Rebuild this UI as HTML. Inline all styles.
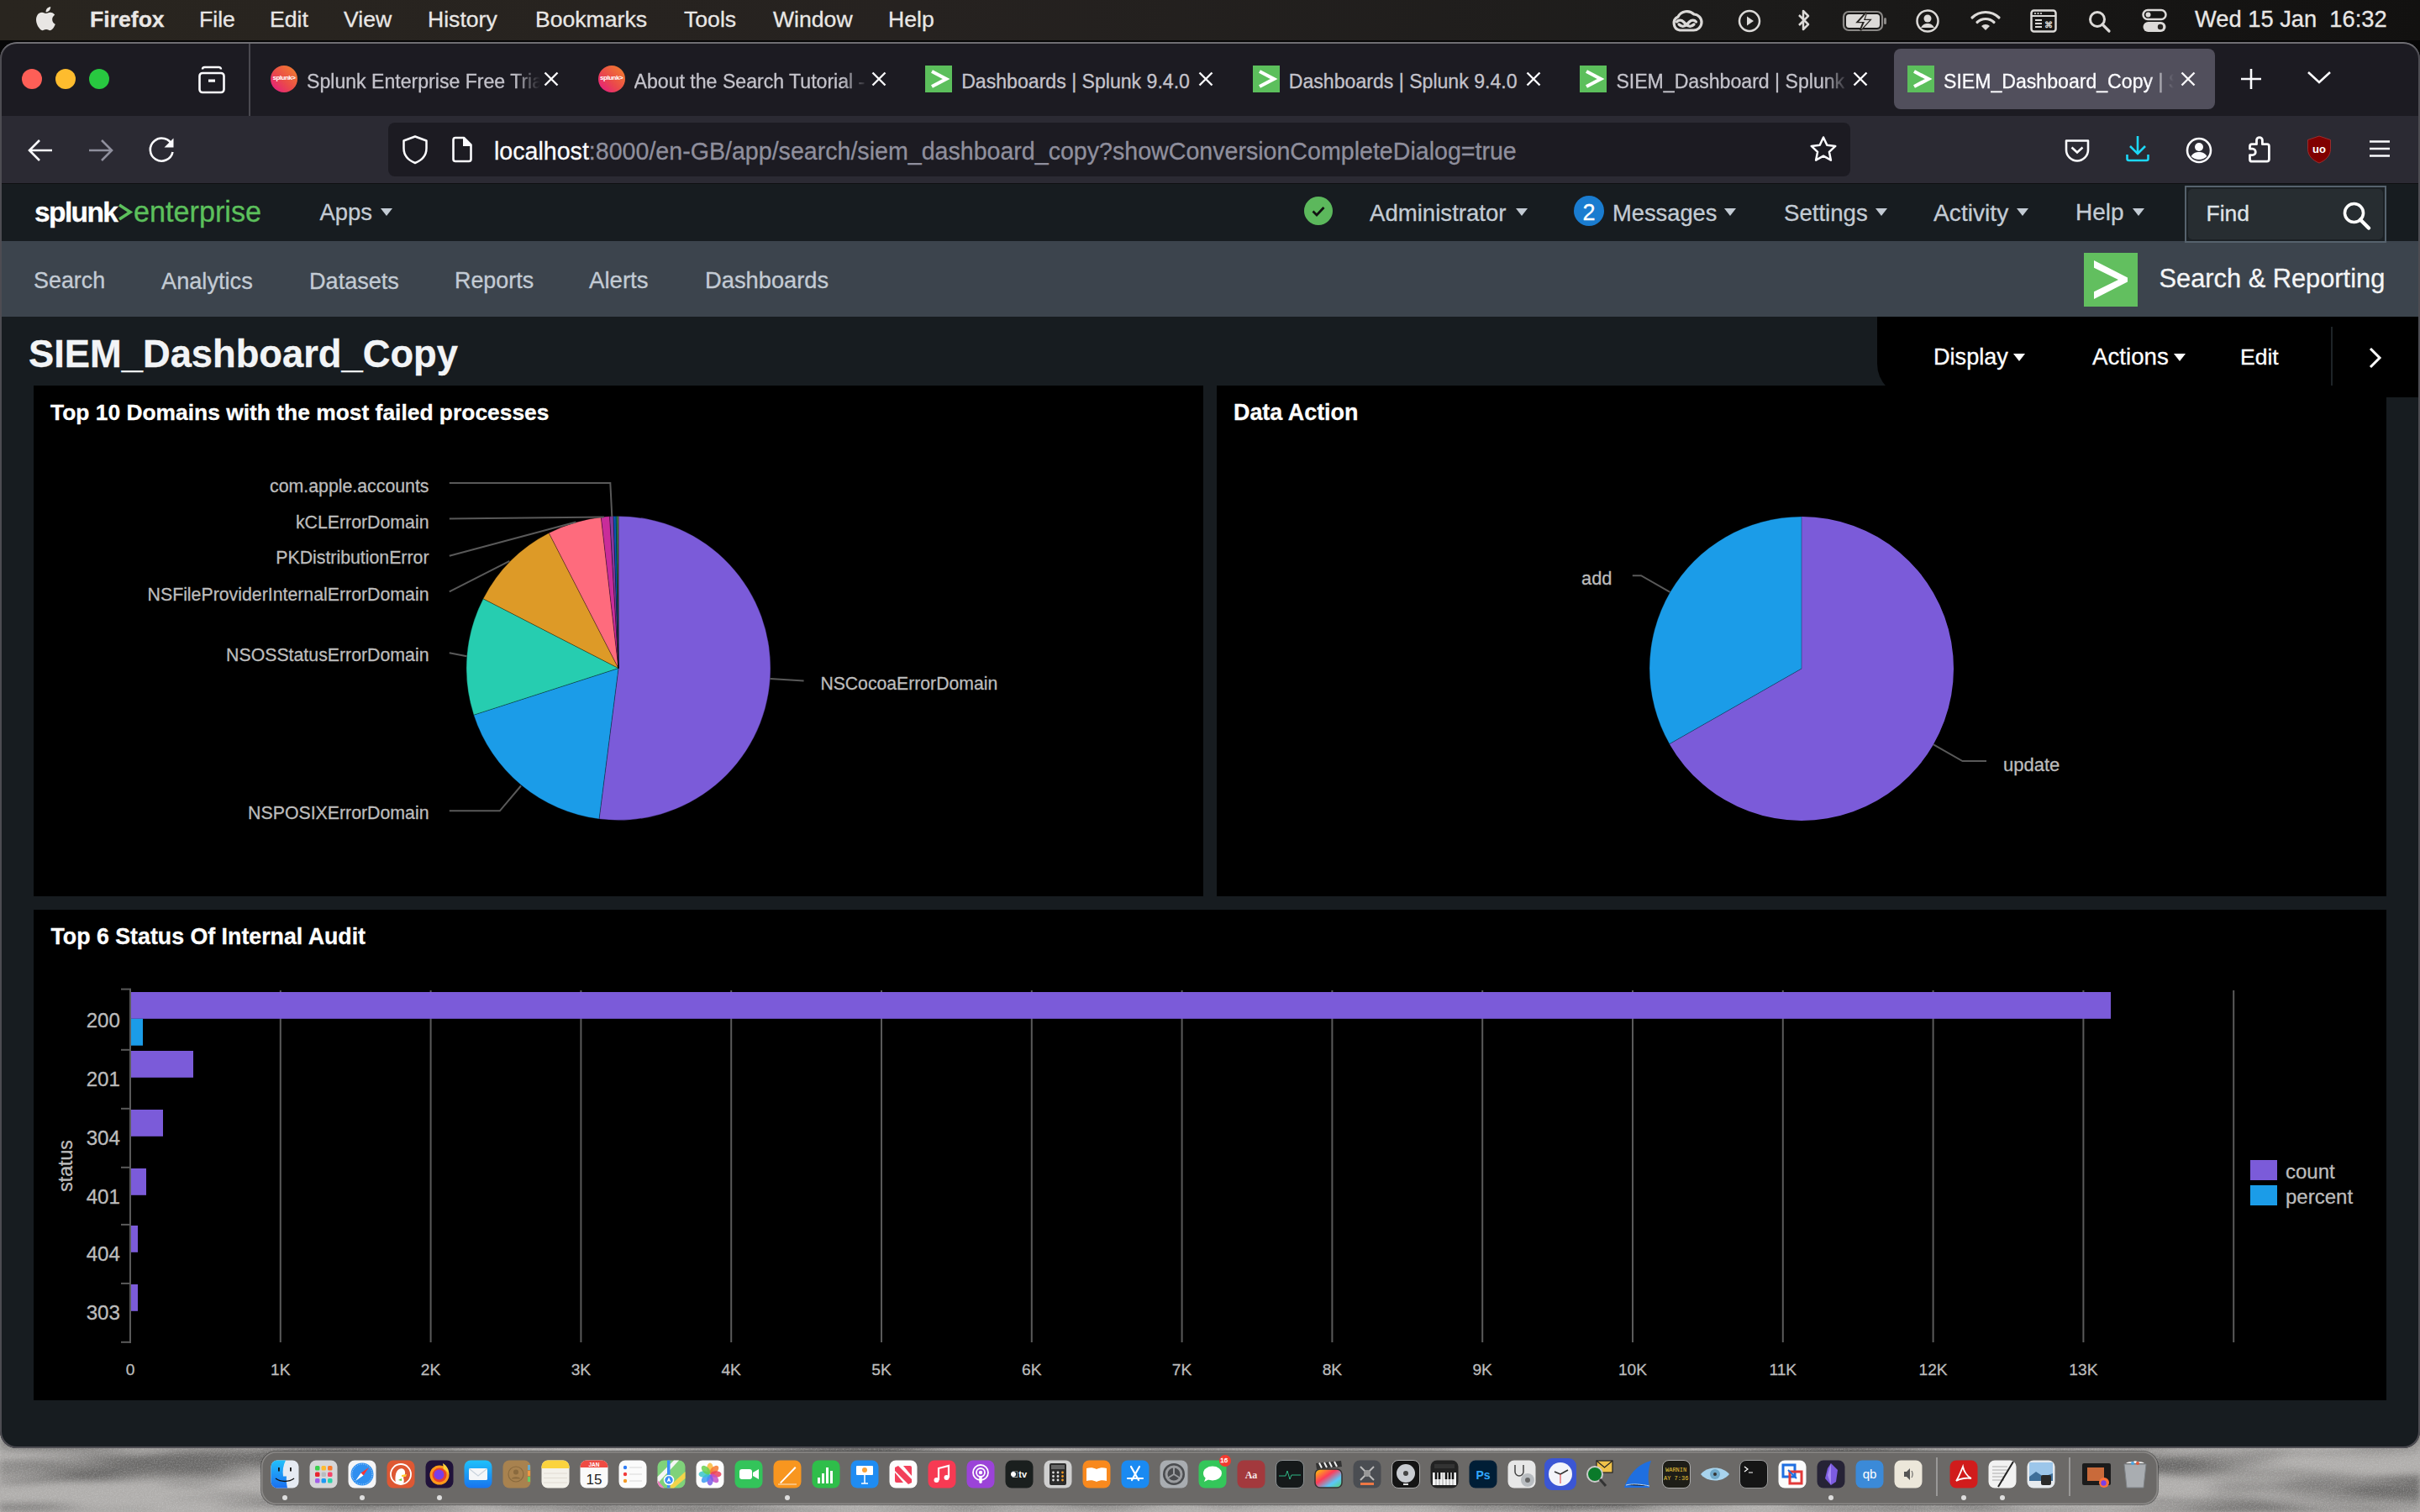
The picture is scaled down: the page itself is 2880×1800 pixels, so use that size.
<!DOCTYPE html><html><head><meta charset="utf-8"><style>html,body{margin:0;padding:0;width:2880px;height:1800px;overflow:hidden;background:#b8b6b4}*{box-sizing:border-box} .a{position:absolute} .t{position:absolute;white-space:nowrap;line-height:1;font-family:"Liberation Sans", sans-serif;-webkit-text-stroke:0.3px}body{font-family:"Liberation Sans", sans-serif} svg{overflow:visible}</style></head><body><div class="a" style="left:0;top:0;width:2880px;height:1800px;background:#a9a7a5"></div>
<svg class="a" style="left:0;top:1690px" width="2880" height="110"><defs><filter id="mrb" x="0" y="0" width="100%" height="100%" color-interpolation-filters="sRGB"><feTurbulence type="fractalNoise" baseFrequency="0.0035 0.03" numOctaves="3" seed="11"/><feColorMatrix type="matrix" values="0 0 0 0 0.42  0 0 0 0 0.415  0 0 0 0 0.41  3.0 0 0 0 -1.15"/><feGaussianBlur stdDeviation="3"/></filter><filter id="grn" x="0" y="0" width="100%" height="100%" color-interpolation-filters="sRGB"><feTurbulence type="fractalNoise" baseFrequency="0.6" numOctaves="2" seed="2"/><feColorMatrix type="matrix" values="0 0 0 0 0.9  0 0 0 0 0.9  0 0 0 0 0.9  1.4 0 0 0 -0.55"/></filter></defs><rect width="2880" height="110" fill="#b0aeac"/><rect width="2880" height="110" filter="url(#mrb)"/><rect width="2880" height="110" filter="url(#grn)" opacity="0.35"/></svg>
<div class="a" style="left:0.0px;top:0.0px;width:2880.0px;height:48.0px;background:linear-gradient(90deg,#29251f 0%,#262220 38%,#1d1c1b 70%,#121110 100%);"></div>
<div class="a" style="left:0.0px;top:48.0px;width:2880.0px;height:2.0px;background:#121110;"></div>
<svg class="a" style="left:38.0px;top:5.0px;" width="30" height="34" viewBox="0 0 30 34"><path fill="#e8e6e4" d="M24.2 18.1c0-3.6 2.9-5.3 3.1-5.4-1.7-2.5-4.3-2.8-5.2-2.9-2.2-.2-4.3 1.3-5.4 1.3-1.1 0-2.8-1.3-4.7-1.3-2.4 0-4.6 1.4-5.8 3.6-2.5 4.3-.6 10.7 1.8 14.2 1.2 1.7 2.6 3.6 4.4 3.6 1.8-.1 2.4-1.1 4.6-1.1 2.1 0 2.7 1.1 4.6 1.1 1.9 0 3.1-1.7 4.3-3.4 1.3-2 1.9-3.9 1.9-4-.1 0-3.6-1.4-3.6-5.7zM20.7 7.5c1-1.2 1.6-2.8 1.5-4.5-1.4.1-3.1.9-4.1 2.1-.9 1-1.7 2.7-1.5 4.3 1.6.1 3.1-.8 4.1-1.9z"/></svg>
<div class="t" style="top:9.5px;font-size:26.6px;color:#e9e7e5;font-weight:700;left:107.0px;">Firefox</div>
<div class="t" style="top:9.5px;font-size:26.6px;color:#e9e7e5;left:237.0px;">File</div>
<div class="t" style="top:9.5px;font-size:26.6px;color:#e9e7e5;left:321.0px;">Edit</div>
<div class="t" style="top:9.5px;font-size:26.6px;color:#e9e7e5;left:409.0px;">View</div>
<div class="t" style="top:9.5px;font-size:26.6px;color:#e9e7e5;left:509.0px;">History</div>
<div class="t" style="top:9.5px;font-size:26.6px;color:#e9e7e5;left:637.0px;">Bookmarks</div>
<div class="t" style="top:9.5px;font-size:26.6px;color:#e9e7e5;left:814.0px;">Tools</div>
<div class="t" style="top:9.5px;font-size:26.6px;color:#e9e7e5;left:920.0px;">Window</div>
<div class="t" style="top:9.5px;font-size:26.6px;color:#e9e7e5;left:1057.0px;">Help</div>
<svg class="a" style="left:1984.0px;top:8.0px;" width="46" height="34" viewBox="0 0 46 34"><g fill="none" stroke="#dcdad8" stroke-width="3.2" stroke-linecap="round"><path d="M15 28H31a9.5 9.5 0 0 0 1-19 12 12 0 0 0-19 3A8.5 8.5 0 0 0 15 28z"/><path d="M14 21c3.5 3.5 7 2.5 9.5 0l3-3c2.5-2.5 6-2.5 8 0"/><path d="M32 21c-3.5 3.5-7 2.5-9.5 0l-3-3c-2.5-2.5-6-2.5-8 0"/></g></svg>
<svg class="a" style="left:2068.0px;top:11.0px;" width="28" height="28" viewBox="0 0 28 28"><circle cx="14" cy="14" r="12" fill="none" stroke="#dcdad8" stroke-width="2.5"/><path d="M11 8.5l8 5.5-8 5.5z" fill="#dcdad8"/></svg>
<svg class="a" style="left:2136.0px;top:9.0px;" width="20" height="32" viewBox="0 0 20 32"><path d="M5 9l11 11-6 6V4l6 6L5 21" fill="none" stroke="#dcdad8" stroke-width="2.5" stroke-linejoin="round"/></svg>
<svg class="a" style="left:2192.0px;top:12.0px;" width="56" height="26" viewBox="0 0 56 26"><rect x="2" y="2" width="46" height="22" rx="6" fill="none" stroke="#8a8886" stroke-width="2.2"/><rect x="5" y="5" width="40" height="16" rx="3.5" fill="#dcdad8"/><rect x="50" y="9" width="3" height="8" rx="1.5" fill="#8a8886"/><path d="M29 3l-10 11h7l-4 10 11-12h-7z" fill="#25221f" stroke="#25221f" stroke-width="2.5"/><path d="M29 4l-9 10h7l-4 9 10-11h-7z" fill="#dcdad8"/></svg>
<svg class="a" style="left:2279.0px;top:10.0px;" width="30" height="30" viewBox="0 0 30 30"><circle cx="15" cy="15" r="12.5" fill="none" stroke="#dcdad8" stroke-width="2.5"/><circle cx="15" cy="12" r="4.5" fill="#dcdad8"/><path d="M7 23c2-4 5-5 8-5s6 1 8 5" fill="#dcdad8"/></svg>
<svg class="a" style="left:2344.0px;top:10.0px;" width="38" height="28" viewBox="0 0 38 28"><path d="M3 11a23 23 0 0 1 32 0" fill="none" stroke="#dcdad8" stroke-width="3.2" stroke-linecap="round"/><path d="M9 16.5a14.5 14.5 0 0 1 20 0" fill="none" stroke="#dcdad8" stroke-width="3.2" stroke-linecap="round"/><path d="M19 26l-5-5a7 7 0 0 1 10 0z" fill="#dcdad8"/></svg>
<svg class="a" style="left:2416.0px;top:11.0px;" width="32" height="28" viewBox="0 0 32 28"><rect x="1.5" y="1.5" width="29" height="25" rx="3" fill="none" stroke="#dcdad8" stroke-width="2.5"/><path d="M1.5 8h29" stroke="#dcdad8" stroke-width="2"/><circle cx="6" cy="5" r="1.1" fill="#dcdad8"/><circle cx="9.5" cy="5" r="1.1" fill="#dcdad8"/><circle cx="13" cy="5" r="1.1" fill="#dcdad8"/><path d="M6 13h8M6 17h8M6 21h8" stroke="#dcdad8" stroke-width="2"/><text x="16.5" y="22" font-size="10" font-weight="700" fill="#dcdad8" font-family="Liberation Sans">⌘</text></svg>
<svg class="a" style="left:2484.0px;top:11.0px;" width="30" height="30" viewBox="0 0 30 30"><circle cx="12" cy="12" r="8.5" fill="none" stroke="#dcdad8" stroke-width="3"/><path d="M18 18l8 8" stroke="#dcdad8" stroke-width="3.2" stroke-linecap="round"/></svg>
<svg class="a" style="left:2549.0px;top:10.0px;" width="30" height="30" viewBox="0 0 30 30"><rect x="1.5" y="2" width="27" height="11" rx="5.5" fill="none" stroke="#dcdad8" stroke-width="2.5"/><circle cx="7.5" cy="7.5" r="3" fill="#dcdad8"/><rect x="1.5" y="16" width="27" height="12" rx="6" fill="#dcdad8"/><circle cx="22" cy="22" r="3.2" fill="#25221f"/></svg>
<div class="t" style="top:8.9px;font-size:27.3px;color:#e9e7e5;left:2612.0px;">Wed 15 Jan&nbsp; 16:32</div>
<div class="a" style="left:0.0px;top:48.0px;width:2880.0px;height:32.0px;background:#060606;"></div>
<div class="a" style="left:0;top:0;width:2880px;height:1724px;clip-path:inset(50px 0 0 0 round 20px);background:#171c20">
<div class="a" style="left:0.0px;top:49.0px;width:2880.0px;height:89.0px;background:#1c1b22;"></div>
<div class="a" style="left:26.0px;top:82.0px;width:24.0px;height:24.0px;background:#fe5f57;border-radius:50%"></div>
<div class="a" style="left:66.0px;top:82.0px;width:24.0px;height:24.0px;background:#febc2e;border-radius:50%"></div>
<div class="a" style="left:106.0px;top:82.0px;width:24.0px;height:24.0px;background:#28c840;border-radius:50%"></div>
<svg class="a" style="left:232.0px;top:76.0px;" width="40" height="38" viewBox="0 0 40 38"><path d="M9 6.5a2.5 2.5 0 0 1 2.5-2.5h17a2.5 2.5 0 0 1 2.5 2.5" fill="none" stroke="#fbfbfe" stroke-width="2.5"/><rect x="5.5" y="11" width="29" height="23" rx="3.5" fill="none" stroke="#fbfbfe" stroke-width="2.6"/><rect x="16" y="18.5" width="8" height="3.2" fill="#fbfbfe"/></svg>
<div class="a" style="left:296.0px;top:51.0px;width:2.0px;height:87.0px;background:#4a4950;"></div>
<div class="a" style="left:2254.0px;top:58.0px;width:382.0px;height:72.0px;background:#514f5c;border-radius:8px"></div>
<div class="a" style="left:322.0px;top:78.0px;width:32.0px;height:32.0px;background:linear-gradient(45deg, #e3168a 0%, #ea4a4a 45%, #f3852a 100%);border-radius:50%;overflow:hidden"><div class="t" style="left:16px;top:11px;font-size:8px;font-weight:700;color:#fff;letter-spacing:-0.5px;transform:translateX(-50%);-webkit-text-stroke:0">splunk&gt;</div></div>
<div class="a" style="left:365.0px;top:72px;width:278px;height:44px;overflow:hidden;-webkit-mask-image:linear-gradient(90deg,#000 89%,transparent 100%);"><div class="t" style="left:0;top:13.9px;font-size:23.1px;color:#c4c3cb">Splunk Enterprise Free Trial | Splunk</div></div>
<svg class="a" style="left:647.0px;top:85.0px;" width="18" height="18" viewBox="0 0 18 18"><path d="M1.5 1.5l15 15M16.5 1.5l-15 15" stroke="#fbfbfe" stroke-width="2.4"/></svg>
<div class="a" style="left:711.6px;top:78.0px;width:32.0px;height:32.0px;background:linear-gradient(45deg, #e3168a 0%, #ea4a4a 45%, #f3852a 100%);border-radius:50%;overflow:hidden"><div class="t" style="left:16px;top:11px;font-size:8px;font-weight:700;color:#fff;letter-spacing:-0.5px;transform:translateX(-50%);-webkit-text-stroke:0">splunk&gt;</div></div>
<div class="a" style="left:754.6px;top:72px;width:278px;height:44px;overflow:hidden;-webkit-mask-image:linear-gradient(90deg,#000 89%,transparent 100%);"><div class="t" style="left:0;top:13.9px;font-size:23.1px;color:#c4c3cb">About the Search Tutorial - Splunk</div></div>
<svg class="a" style="left:1036.6px;top:85.0px;" width="18" height="18" viewBox="0 0 18 18"><path d="M1.5 1.5l15 15M16.5 1.5l-15 15" stroke="#fbfbfe" stroke-width="2.4"/></svg>
<div class="a" style="left:1101.2px;top:78.0px;width:32.0px;height:32.0px;background:#5cbf5c;"><svg class="a" style="left:0;top:0" width="32" height="32"><path d="M8 7l17 9-17 9" fill="none" stroke="#fff" stroke-width="4.2" stroke-linejoin="miter"/></svg></div>
<div class="a" style="left:1144.2px;top:72px;width:278px;height:44px;overflow:hidden;"><div class="t" style="left:0;top:13.9px;font-size:23.1px;color:#c4c3cb">Dashboards | Splunk 9.4.0</div></div>
<svg class="a" style="left:1426.2px;top:85.0px;" width="18" height="18" viewBox="0 0 18 18"><path d="M1.5 1.5l15 15M16.5 1.5l-15 15" stroke="#fbfbfe" stroke-width="2.4"/></svg>
<div class="a" style="left:1490.8px;top:78.0px;width:32.0px;height:32.0px;background:#5cbf5c;"><svg class="a" style="left:0;top:0" width="32" height="32"><path d="M8 7l17 9-17 9" fill="none" stroke="#fff" stroke-width="4.2" stroke-linejoin="miter"/></svg></div>
<div class="a" style="left:1533.8px;top:72px;width:278px;height:44px;overflow:hidden;"><div class="t" style="left:0;top:13.9px;font-size:23.1px;color:#c4c3cb">Dashboards | Splunk 9.4.0</div></div>
<svg class="a" style="left:1815.8px;top:85.0px;" width="18" height="18" viewBox="0 0 18 18"><path d="M1.5 1.5l15 15M16.5 1.5l-15 15" stroke="#fbfbfe" stroke-width="2.4"/></svg>
<div class="a" style="left:1880.4px;top:78.0px;width:32.0px;height:32.0px;background:#5cbf5c;"><svg class="a" style="left:0;top:0" width="32" height="32"><path d="M8 7l17 9-17 9" fill="none" stroke="#fff" stroke-width="4.2" stroke-linejoin="miter"/></svg></div>
<div class="a" style="left:1923.4px;top:72px;width:278px;height:44px;overflow:hidden;-webkit-mask-image:linear-gradient(90deg,#000 89%,transparent 100%);"><div class="t" style="left:0;top:13.9px;font-size:23.1px;color:#c4c3cb">SIEM_Dashboard | Splunk 9.4.0</div></div>
<svg class="a" style="left:2205.4px;top:85.0px;" width="18" height="18" viewBox="0 0 18 18"><path d="M1.5 1.5l15 15M16.5 1.5l-15 15" stroke="#fbfbfe" stroke-width="2.4"/></svg>
<div class="a" style="left:2270.0px;top:78.0px;width:32.0px;height:32.0px;background:#5cbf5c;"><svg class="a" style="left:0;top:0" width="32" height="32"><path d="M8 7l17 9-17 9" fill="none" stroke="#fff" stroke-width="4.2" stroke-linejoin="miter"/></svg></div>
<div class="a" style="left:2313.0px;top:72px;width:274px;height:44px;overflow:hidden;-webkit-mask-image:linear-gradient(90deg,#000 89%,transparent 100%);"><div class="t" style="left:0;top:13.9px;font-size:23.1px;color:#fbfbfe">SIEM_Dashboard_Copy | Splunk</div></div>
<svg class="a" style="left:2595.0px;top:85.0px;" width="18" height="18" viewBox="0 0 18 18"><path d="M1.5 1.5l15 15M16.5 1.5l-15 15" stroke="#fbfbfe" stroke-width="2.4"/></svg>
<svg class="a" style="left:2665.0px;top:80.0px;" width="28" height="28" viewBox="0 0 28 28"><path d="M14 2v24M2 14h24" stroke="#fbfbfe" stroke-width="2.6"/></svg>
<svg class="a" style="left:2744.0px;top:82.0px;" width="32" height="20" viewBox="0 0 32 20"><path d="M3 4l13 12L29 4" fill="none" stroke="#fbfbfe" stroke-width="2.6"/></svg>
<div class="a" style="left:0.0px;top:138.0px;width:2880.0px;height:80.0px;background:#2b2a33;"></div>
<div class="a" style="left:0.0px;top:218.0px;width:2880.0px;height:1.0px;background:#0f0f12;"></div>
<svg class="a" style="left:32.0px;top:164.0px;" width="32" height="30" viewBox="0 0 32 30"><path d="M15 3L3 15l12 12M3 15h27" fill="none" stroke="#fbfbfe" stroke-width="2.6"/></svg>
<svg class="a" style="left:104.0px;top:164.0px;" width="32" height="30" viewBox="0 0 32 30"><path d="M17 3l12 12-12 12M29 15H2" fill="none" stroke="#8f8f9d" stroke-width="2.6"/></svg>
<svg class="a" style="left:174.0px;top:160.0px;" width="36" height="36" viewBox="0 0 36 36"><path d="M31 13.5A13.5 13.5 0 1 0 31.5 21" fill="none" stroke="#fbfbfe" stroke-width="2.6"/><path d="M32.5 4.5v11h-11z" fill="#fbfbfe"/></svg>
<div class="a" style="left:462.0px;top:146.0px;width:1740.0px;height:64.0px;background:#1c1b22;border-radius:8px"></div>
<svg class="a" style="left:476.0px;top:160.0px;" width="36" height="36" viewBox="0 0 36 36"><path d="M18 2.5L4.5 7.5v9c0 8.5 6 14.5 13.5 17.5 7.5-3 13.5-9 13.5-17.5v-9z" fill="none" stroke="#fbfbfe" stroke-width="2.5" stroke-linejoin="round"/></svg>
<svg class="a" style="left:536.0px;top:162.0px;" width="28" height="32" viewBox="0 0 28 32"><path d="M3.5 4.5a2.5 2.5 0 0 1 2.5-2.5h10l8.5 8.5v17a2.5 2.5 0 0 1-2.5 2.5H6a2.5 2.5 0 0 1-2.5-2.5z" fill="none" stroke="#fbfbfe" stroke-width="2.6" stroke-linejoin="round"/><path d="M15 2v10h10z" fill="#fbfbfe"/></svg>
<div class="t" style="top:166.3px;font-size:28.6px;color:#8f8f9d;left:588.0px;"><span style="color:#fbfbfe">localhost</span>:8000/en-GB/app/search/siem_dashboard_copy?showConversionCompleteDialog=true</div>
<svg class="a" style="left:2152.0px;top:160.0px;" width="36" height="36" viewBox="0 0 36 36"><path d="M18 3.5l4.3 9.2 10 1.2-7.4 6.9 2 9.9L18 25.7l-8.9 5 2-9.9-7.4-6.9 10-1.2z" fill="none" stroke="#fbfbfe" stroke-width="2.5" stroke-linejoin="round"/></svg>
<svg class="a" style="left:2455.0px;top:163.0px;" width="34" height="32" viewBox="0 0 34 32"><path d="M4 4.5h26v11c0 7-6 13-13 13S4 22.5 4 15.5z" fill="none" stroke="#fbfbfe" stroke-width="2.6" stroke-linejoin="round"/><path d="M10.5 12.5L17 18.5l6.5-6" fill="none" stroke="#fbfbfe" stroke-width="2.6"/></svg>
<svg class="a" style="left:2528.0px;top:160.0px;" width="32" height="34" viewBox="0 0 32 34"><path d="M16 2v21M7 14l9 9 9-9" fill="none" stroke="#1cd8f8" stroke-width="2.6"/><path d="M3.5 24v5a2 2 0 0 0 2 2h21a2 2 0 0 0 2-2v-5" fill="none" stroke="#1cd8f8" stroke-width="2.6"/></svg>
<svg class="a" style="left:2600.0px;top:162.0px;" width="34" height="34" viewBox="0 0 34 34"><circle cx="17" cy="17" r="14" fill="none" stroke="#fbfbfe" stroke-width="2.6"/><circle cx="17" cy="13" r="5" fill="#fbfbfe"/><path d="M7.5 24c2.5-4 6-5 9.5-5s7 1 9.5 5c-2.5 2.5-6 4-9.5 4s-7-1.5-9.5-4z" fill="#fbfbfe"/></svg>
<svg class="a" style="left:2665.0px;top:155.0px;" width="50" height="45" viewBox="0 0 50 45"><path d="M12.5 22.2V19.2a2.5 2.5 0 0 1 2.5-2.5H20.5V12a3.45 3.45 0 0 1 6.9 0V16.7H33a2.4 2.4 0 0 1 2.4 2.4V34.8a2.4 2.4 0 0 1-2.4 2.4H15a2.5 2.5 0 0 1-2.5-2.5V29.6H15.6a3.7 3.7 0 0 0 0-7.4z" fill="none" stroke="#fbfbfe" stroke-width="2.8" stroke-linejoin="round"/></svg>
<svg class="a" style="left:2744.0px;top:160.0px;" width="32" height="36" viewBox="0 0 32 36"><path d="M16 2L2.5 6.5v11c0 8 6 13.5 13.5 16.5 7.5-3 13.5-8.5 13.5-16.5v-11z" fill="#800000" stroke="#a33" stroke-width="0.8"/><text x="16" y="22" text-anchor="middle" font-size="13" font-weight="700" fill="#fff" font-family="Liberation Sans">uo</text></svg>
<svg class="a" style="left:2818.0px;top:164.0px;" width="28" height="26" viewBox="0 0 28 26"><path d="M2 4.5h24M2 13h24M2 21.5h24" stroke="#fbfbfe" stroke-width="2.6"/></svg>
<div class="a" style="left:0.0px;top:219.0px;width:2880.0px;height:68.0px;background:#171c20;"></div>
<div class="t" style="top:235.6px;font-size:33.5px;color:#ffffff;font-weight:700;letter-spacing:-1.6px;left:41.0px;">splunk</div>
<svg class="a" style="left:140.0px;top:240.0px;" width="18" height="26" viewBox="0 0 18 26"><path d="M2 4l13 8.5L2 21" fill="none" stroke="#5cc05c" stroke-width="3.6"/></svg>
<div class="t" style="top:235.0px;font-size:34.2px;color:#5cc05c;letter-spacing:0px;left:159.0px;">enterprise</div>
<div class="t" style="top:238.8px;font-size:27.4px;color:#c3cbd4;left:380.5px;">Apps</div>
<svg class="a" style="left:453.0px;top:248.0px;" width="14" height="9" viewBox="0 0 14 9"><path d="M0 0h14l-7.0 9z" fill="#c3cbd4"/></svg>
<div class="a" style="left:1552.0px;top:234.0px;width:34.0px;height:34.0px;background:#5cb85c;border-radius:50%"><svg class="a" style="left:0;top:0" width="34" height="34"><path d="M10.5 17.5l4.5 4.5 8.5-9" fill="none" stroke="#111" stroke-width="2.8"/></svg></div>
<div class="t" style="top:239.6px;font-size:27.6px;color:#c3cbd4;left:1630.0px;">Administrator</div>
<svg class="a" style="left:1804.0px;top:248.0px;" width="14" height="9" viewBox="0 0 14 9"><path d="M0 0h14l-7.0 9z" fill="#c3cbd4"/></svg>
<div class="a" style="left:1873.0px;top:233.0px;width:36.0px;height:36.0px;background:#1a7cd0;border-radius:50%"></div>
<div class="t" style="top:240.1px;font-size:27px;color:#ffffff;left:1891.0px;transform:translateX(-50%);">2</div>
<div class="t" style="top:239.9px;font-size:27.3px;color:#c3cbd4;left:1919.0px;">Messages</div>
<svg class="a" style="left:2052.0px;top:248.0px;" width="14" height="9" viewBox="0 0 14 9"><path d="M0 0h14l-7.0 9z" fill="#c3cbd4"/></svg>
<div class="t" style="top:239.6px;font-size:27.6px;color:#c3cbd4;left:2123.0px;">Settings</div>
<svg class="a" style="left:2232.0px;top:248.0px;" width="14" height="9" viewBox="0 0 14 9"><path d="M0 0h14l-7.0 9z" fill="#c3cbd4"/></svg>
<div class="t" style="top:239.1px;font-size:28.2px;color:#c3cbd4;left:2301.0px;">Activity</div>
<svg class="a" style="left:2400.0px;top:248.0px;" width="14" height="9" viewBox="0 0 14 9"><path d="M0 0h14l-7.0 9z" fill="#c3cbd4"/></svg>
<div class="t" style="top:239.3px;font-size:28.0px;color:#c3cbd4;left:2470.0px;">Help</div>
<svg class="a" style="left:2538.0px;top:248.0px;" width="14" height="9" viewBox="0 0 14 9"><path d="M0 0h14l-7.0 9z" fill="#c3cbd4"/></svg>
<div class="a" style="left:0.0px;top:287.0px;width:2880.0px;height:90.0px;background:#3c444d;"></div>
<div class="t" style="top:320.7px;font-size:26.9px;color:#c3cbd4;left:40.0px;">Search</div>
<div class="t" style="top:320.5px;font-size:27.2px;color:#c3cbd4;left:192.0px;">Analytics</div>
<div class="t" style="top:320.6px;font-size:27.1px;color:#c3cbd4;left:368.0px;">Datasets</div>
<div class="t" style="top:320.7px;font-size:26.9px;color:#c3cbd4;left:541.0px;">Reports</div>
<div class="t" style="top:320.1px;font-size:27.6px;color:#c3cbd4;left:701.0px;">Alerts</div>
<div class="t" style="top:320.4px;font-size:27.3px;color:#c3cbd4;left:839.0px;">Dashboards</div>
<div class="a" style="left:2480.0px;top:301.0px;width:64.0px;height:64.0px;background:#62bf5f;"><svg class="a" style="left:0;top:0" width="64" height="64"><path d="M12 9l40 20.5v5L12 55v-8.7l29-14.3-29-14.3z" fill="#fff"/></svg></div>
<div class="t" style="top:316.9px;font-size:30.8px;color:#f4f5f6;left:2569.5px;">Search &amp; Reporting</div>
<div class="a" style="left:2600.0px;top:221.0px;width:240.0px;height:68.0px;background:#1b2024;border:2px solid #56626d;box-sizing:border-box"><div class="a" style="left:2px;top:2px;right:2px;bottom:2px;background:#272d31;border-radius:5px"></div></div>
<div class="t" style="top:240.6px;font-size:26.5px;color:#dfe3e8;left:2625.5px;">Find</div>
<svg class="a" style="left:2784.0px;top:238.0px;" width="44" height="36" viewBox="0 0 44 36"><circle cx="17.5" cy="15.5" r="11" fill="none" stroke="#ffffff" stroke-width="3.6"/><path d="M25 23.5l10 10" stroke="#ffffff" stroke-width="4.5" stroke-linecap="round"/></svg>
<div class="t" style="top:398.7px;font-size:45.3px;color:#f2f4f6;font-weight:700;left:34.0px;">SIEM_Dashboard_Copy</div>
<div class="a" style="left:2234.0px;top:377.0px;width:646.0px;height:96.0px;background:#000;border-bottom-left-radius:40px"></div>
<div class="t" style="top:411.1px;font-size:27.1px;color:#ffffff;left:2301.0px;">Display</div>
<svg class="a" style="left:2396.0px;top:421.0px;" width="14" height="9" viewBox="0 0 14 9"><path d="M0 0h14l-7.0 9z" fill="#ffffff"/></svg>
<div class="t" style="top:410.6px;font-size:27.7px;color:#ffffff;left:2490.0px;">Actions</div>
<svg class="a" style="left:2587.0px;top:421.0px;" width="14" height="9" viewBox="0 0 14 9"><path d="M0 0h14l-7.0 9z" fill="#ffffff"/></svg>
<div class="t" style="top:411.6px;font-size:26.5px;color:#ffffff;left:2666.0px;">Edit</div>
<div class="a" style="left:2774.0px;top:389.0px;width:2.0px;height:72.0px;background:#1e2428;"></div>
<svg class="a" style="left:2816.0px;top:412.0px;" width="22" height="28" viewBox="0 0 22 28"><path d="M5 3l11 11L5 25" fill="none" stroke="#fff" stroke-width="3"/></svg>
<div class="a" style="left:40.0px;top:459.0px;width:1392.0px;height:608.0px;background:#000;"></div>
<div class="a" style="left:1448.0px;top:459.0px;width:1392.0px;height:608.0px;background:#000;"></div>
<div class="a" style="left:2840.0px;top:459.0px;width:38.0px;height:14.0px;background:#000;"></div>
<div class="a" style="left:40.0px;top:1083.0px;width:2800.0px;height:584.0px;background:#000;"></div>
<div class="t" style="top:477.7px;font-size:26.4px;color:#ffffff;font-weight:700;left:60.0px;">Top 10 Domains with the most failed processes</div>
<div class="t" style="top:477.7px;font-size:26.9px;color:#ffffff;font-weight:700;left:1468.0px;">Data Action</div>
<div class="t" style="top:1101.7px;font-size:26.75px;color:#ffffff;font-weight:700;left:60.5px;">Top 6 Status Of Internal Audit</div>
<svg class="a" style="left:0;top:0" width="2880" height="1800"><path d="M736.00 795.50L736.00 614.50A181 181 0 1 1 713.00 975.03Z" fill="#7b5bd9" stroke="#000" stroke-width="0.6" stroke-opacity="0.5"/><path d="M736.00 795.50L713.00 975.03A181 181 0 0 1 563.76 851.13Z" fill="#1b9ce8" stroke="#000" stroke-width="0.6" stroke-opacity="0.5"/><path d="M736.00 795.50L563.76 851.13A181 181 0 0 1 575.02 712.77Z" fill="#26cdb0" stroke="#000" stroke-width="0.6" stroke-opacity="0.5"/><path d="M736.00 795.50L575.02 712.77A181 181 0 0 1 653.27 634.52Z" fill="#dd9a27" stroke="#000" stroke-width="0.6" stroke-opacity="0.5"/><path d="M736.00 795.50L653.27 634.52A181 181 0 0 1 715.35 615.68Z" fill="#fe6b7d" stroke="#000" stroke-width="0.6" stroke-opacity="0.5"/><path d="M736.00 795.50L715.35 615.68A181 181 0 0 1 725.58 614.80Z" fill="#c92c9a" stroke="#000" stroke-width="0.6" stroke-opacity="0.5"/><path d="M736.00 795.50L725.58 614.80A181 181 0 0 1 730.00 614.60Z" fill="#843a9c" stroke="#000" stroke-width="0.6" stroke-opacity="0.5"/><path d="M736.00 795.50L730.00 614.60A181 181 0 0 1 733.16 614.52Z" fill="#0b57b9" stroke="#000" stroke-width="0.6" stroke-opacity="0.5"/><path d="M736.00 795.50L733.16 614.52A181 181 0 0 1 735.05 614.50Z" fill="#0e8d80" stroke="#000" stroke-width="0.6" stroke-opacity="0.5"/><path d="M736.00 795.50L735.05 614.50A181 181 0 0 1 736.00 614.50Z" fill="#98ae10" stroke="#000" stroke-width="0.6" stroke-opacity="0.5"/><polyline points="534.8,575.0 726.3,575.0 728.3,615.0" fill="none" stroke="#595959" stroke-width="2"/><polyline points="534.8,617.6 718.9,615.4" fill="none" stroke="#595959" stroke-width="2"/><polyline points="534.8,661.7 685.4,621.5" fill="none" stroke="#595959" stroke-width="2"/><polyline points="534.8,704.3 606.4,667.8" fill="none" stroke="#595959" stroke-width="2"/><polyline points="534.8,777.3 555.5,781.3" fill="none" stroke="#595959" stroke-width="2"/><polyline points="534.8,965.3 594.8,965.3 620.0,935.5" fill="none" stroke="#595959" stroke-width="2"/><polyline points="916.5,807.9 956.6,810.6" fill="none" stroke="#595959" stroke-width="2"/></svg>
<div class="t" style="top:568.6px;font-size:21.3px;color:#bcbcbc;left:510.5px;transform:translateX(-100%);">com.apple.accounts</div>
<div class="t" style="top:611.8px;font-size:21.3px;color:#bcbcbc;left:510.5px;transform:translateX(-100%);">kCLErrorDomain</div>
<div class="t" style="top:653.8px;font-size:21.3px;color:#bcbcbc;left:510.5px;transform:translateX(-100%);">PKDistributionError</div>
<div class="t" style="top:698.0px;font-size:21.3px;color:#bcbcbc;left:510.5px;transform:translateX(-100%);">NSFileProviderInternalErrorDomain</div>
<div class="t" style="top:770.0px;font-size:21.3px;color:#bcbcbc;left:510.5px;transform:translateX(-100%);">NSOSStatusErrorDomain</div>
<div class="t" style="top:958.0px;font-size:21.3px;color:#bcbcbc;left:510.5px;transform:translateX(-100%);">NSPOSIXErrorDomain</div>
<div class="t" style="top:803.1px;font-size:21.2px;color:#bcbcbc;left:976.4px;">NSCocoaErrorDomain</div>
<svg class="a" style="left:0;top:0" width="2880" height="1800"><path d="M2144.00 796.00L2144.00 615.00A181 181 0 1 1 1986.78 885.68Z" fill="#7b5bd9"/><path d="M2144.00 796.00L1986.78 885.68A181 181 0 0 1 2144.00 615.00Z" fill="#1b9ce8" stroke="#000" stroke-width="0.6" stroke-opacity="0.5"/><polyline points="1942.8,685.2 1953.0,685.2 1987.4,704.8" fill="none" stroke="#595959" stroke-width="2"/><polyline points="2301.0,886.3 2335.5,906.0 2364.0,906.0" fill="none" stroke="#595959" stroke-width="2"/></svg>
<div class="t" style="top:677.7px;font-size:21.8px;color:#bcbcbc;left:1918.4px;transform:translateX(-100%);">add</div>
<div class="t" style="top:899.9px;font-size:22.0px;color:#bcbcbc;left:2384.0px;">update</div>
<svg class="a" style="left:0;top:0" width="2880" height="1800"><rect x="332.8" y="1179" width="2" height="419" fill="#5a5a5a"/><rect x="511.6" y="1179" width="2" height="419" fill="#5a5a5a"/><rect x="690.4" y="1179" width="2" height="419" fill="#5a5a5a"/><rect x="869.2" y="1179" width="2" height="419" fill="#5a5a5a"/><rect x="1048.0" y="1179" width="2" height="419" fill="#5a5a5a"/><rect x="1226.8" y="1179" width="2" height="419" fill="#5a5a5a"/><rect x="1405.6" y="1179" width="2" height="419" fill="#5a5a5a"/><rect x="1584.4" y="1179" width="2" height="419" fill="#5a5a5a"/><rect x="1763.2" y="1179" width="2" height="419" fill="#5a5a5a"/><rect x="1942.0" y="1179" width="2" height="419" fill="#5a5a5a"/><rect x="2120.8" y="1179" width="2" height="419" fill="#5a5a5a"/><rect x="2299.6" y="1179" width="2" height="419" fill="#5a5a5a"/><rect x="2478.4" y="1179" width="2" height="419" fill="#5a5a5a"/><rect x="2657.2" y="1179" width="2" height="419" fill="#5a5a5a"/><rect x="154" y="1177" width="2" height="422" fill="#5a5a5a"/><rect x="144" y="1176.6" width="12" height="2" fill="#5a5a5a"/><rect x="144" y="1248.8" width="12" height="2" fill="#5a5a5a"/><rect x="144" y="1318.8" width="12" height="2" fill="#5a5a5a"/><rect x="144" y="1388.8" width="12" height="2" fill="#5a5a5a"/><rect x="144" y="1456.9" width="12" height="2" fill="#5a5a5a"/><rect x="144" y="1526.9" width="12" height="2" fill="#5a5a5a"/><rect x="144" y="1596.8" width="12" height="2" fill="#5a5a5a"/><rect x="156" y="1181" width="2356" height="31.8" fill="#7b5bd9"/><rect x="156" y="1212.8" width="14" height="31.9" fill="#1b9ce8"/><rect x="156" y="1251" width="74" height="31.8" fill="#7b5bd9"/><rect x="156" y="1321" width="38" height="31.8" fill="#7b5bd9"/><rect x="156" y="1391" width="18" height="31.8" fill="#7b5bd9"/><rect x="156" y="1459" width="8" height="31.8" fill="#7b5bd9"/><rect x="156" y="1529" width="8" height="31.8" fill="#7b5bd9"/><rect x="2678" y="1381" width="32" height="24" fill="#7b5bd9"/><rect x="2678" y="1411" width="32" height="24" fill="#1b9ce8"/></svg>
<div class="t" style="top:1202.5px;font-size:24.2px;color:#bcbcbc;left:143.0px;transform:translateX(-100%);">200</div>
<div class="t" style="top:1272.5px;font-size:24.2px;color:#bcbcbc;left:143.0px;transform:translateX(-100%);">201</div>
<div class="t" style="top:1342.5px;font-size:24.2px;color:#bcbcbc;left:143.0px;transform:translateX(-100%);">304</div>
<div class="t" style="top:1412.5px;font-size:24.2px;color:#bcbcbc;left:143.0px;transform:translateX(-100%);">401</div>
<div class="t" style="top:1480.5px;font-size:24.2px;color:#bcbcbc;left:143.0px;transform:translateX(-100%);">404</div>
<div class="t" style="top:1550.5px;font-size:24.2px;color:#bcbcbc;left:143.0px;transform:translateX(-100%);">303</div>
<div class="t" style="top:1620.7px;font-size:19.2px;color:#bcbcbc;left:155.0px;transform:translateX(-50%);">0</div>
<div class="t" style="top:1620.7px;font-size:19.2px;color:#bcbcbc;left:333.8px;transform:translateX(-50%);">1K</div>
<div class="t" style="top:1620.7px;font-size:19.2px;color:#bcbcbc;left:512.6px;transform:translateX(-50%);">2K</div>
<div class="t" style="top:1620.7px;font-size:19.2px;color:#bcbcbc;left:691.4px;transform:translateX(-50%);">3K</div>
<div class="t" style="top:1620.7px;font-size:19.2px;color:#bcbcbc;left:870.2px;transform:translateX(-50%);">4K</div>
<div class="t" style="top:1620.7px;font-size:19.2px;color:#bcbcbc;left:1049.0px;transform:translateX(-50%);">5K</div>
<div class="t" style="top:1620.7px;font-size:19.2px;color:#bcbcbc;left:1227.8px;transform:translateX(-50%);">6K</div>
<div class="t" style="top:1620.7px;font-size:19.2px;color:#bcbcbc;left:1406.6px;transform:translateX(-50%);">7K</div>
<div class="t" style="top:1620.7px;font-size:19.2px;color:#bcbcbc;left:1585.4px;transform:translateX(-50%);">8K</div>
<div class="t" style="top:1620.7px;font-size:19.2px;color:#bcbcbc;left:1764.2px;transform:translateX(-50%);">9K</div>
<div class="t" style="top:1620.7px;font-size:19.2px;color:#bcbcbc;left:1943.0px;transform:translateX(-50%);">10K</div>
<div class="t" style="top:1620.7px;font-size:19.2px;color:#bcbcbc;left:2121.8px;transform:translateX(-50%);">11K</div>
<div class="t" style="top:1620.7px;font-size:19.2px;color:#bcbcbc;left:2300.6px;transform:translateX(-50%);">12K</div>
<div class="t" style="top:1620.7px;font-size:19.2px;color:#bcbcbc;left:2479.4px;transform:translateX(-50%);">13K</div>
<div class="t" style="left:78px;top:1388px;font-size:23px;color:#bcbcbc;transform:translate(-50%,-50%) rotate(-90deg)">status</div>
<div class="t" style="top:1383.3px;font-size:24px;color:#bcbcbc;left:2720.0px;">count</div>
<div class="t" style="top:1412.7px;font-size:24px;color:#bcbcbc;left:2720.0px;">percent</div>
</div>
<div class="a" style="left:0;top:50px;width:2880px;height:1674px;border-radius:20px;box-shadow:inset 0 0 0 2px #4d4c52;pointer-events:none"></div>
<div class="a" style="left:0;top:50px;width:2880px;height:40px;border-radius:20px 20px 0 0;border-top:2.5px solid #6f6e73;-webkit-mask-image:linear-gradient(#000 50%,transparent 100%)"></div>
<div class="a" style="left:311.0px;top:1728.0px;width:2257.0px;height:63.0px;background:#6b6967;border-radius:18px;box-shadow:inset 0 0 0 1.5px #8c8a88, 0 0 0 1px rgba(40,40,40,0.5)"></div>
<svg class="a" style="left:321.7px;top:1738.0px;" width="34" height="34" viewBox="0 0 34 34"><defs><linearGradient id="fd" x1="0" y1="0" x2="0" y2="1"><stop offset="0" stop-color="#22c0fb"/><stop offset="1" stop-color="#1b6ff0"/></linearGradient></defs><rect x="0.5" y="0.5" width="33" height="33" rx="7.5" fill="#e6ebf3" /><path d="M8 .5h10c-3 6-4 12-3 19h4c-.5 4 0 9 1 14H8a7.5 7.5 0 0 1-7.5-7.5V8A7.5 7.5 0 0 1 8 .5z" fill="url(#fd)"/><rect x="9" y="9" width="1.8" height="4.5" fill="#111"/><rect x="23" y="9" width="1.8" height="4.5" fill="#111"/><path d="M6 22c6 4.5 16 4.5 22 0" fill="none" stroke="#111" stroke-width="1.5"/></svg>
<svg class="a" style="left:367.7px;top:1738.0px;" width="34" height="34" viewBox="0 0 34 34"><rect x="0.5" y="0.5" width="33" height="33" rx="7.5" fill="#d6d6d8" /><rect x="7.0" y="7.0" width="5.5" height="5.5" rx="1.5" fill="#3ccf4e"/><rect x="14.5" y="7.0" width="5.5" height="5.5" rx="1.5" fill="#fdbb2f"/><rect x="22.0" y="7.0" width="5.5" height="5.5" rx="1.5" fill="#fb7b2b"/><rect x="7.0" y="14.5" width="5.5" height="5.5" rx="1.5" fill="#e8252f"/><rect x="14.5" y="14.5" width="5.5" height="5.5" rx="1.5" fill="#b9bcc0"/><rect x="22.0" y="14.5" width="5.5" height="5.5" rx="1.5" fill="#f6466a"/><rect x="7.0" y="22.0" width="5.5" height="5.5" rx="1.5" fill="#a35ee8"/><rect x="14.5" y="22.0" width="5.5" height="5.5" rx="1.5" fill="#1c9bf5"/><rect x="22.0" y="22.0" width="5.5" height="5.5" rx="1.5" fill="#2bd3a9"/></svg>
<svg class="a" style="left:413.7px;top:1738.0px;" width="34" height="34" viewBox="0 0 34 34"><rect x="0.5" y="0.5" width="33" height="33" rx="7.5" fill="#f5f5f7" /><circle cx="17" cy="17" r="13.5" fill="#2f8ff0"/><circle cx="17" cy="17" r="12" fill="none" stroke="#fff" stroke-width="0.8" stroke-dasharray="0.8 1.6"/><path d="M25 9L15.5 15.5 18.5 18.5z" fill="#f33"/><path d="M9 25l6.5-9.5 3 3z" fill="#fff"/></svg>
<svg class="a" style="left:459.7px;top:1738.0px;" width="34" height="34" viewBox="0 0 34 34"><rect x="0.5" y="0.5" width="33" height="33" rx="7.5" fill="#de5833" /><circle cx="17" cy="17" r="12" fill="none" stroke="#fff" stroke-width="1.8"/><path d="M11 28c-1-6-1-14 4-17 4-2 8 1 7 6l-2 4c1 3 1 5 0 7z" fill="#fff"/><path d="M18 18l6-1-1 3-5 0z" fill="#fc3"/><path d="M14 24l4 1v-3z" fill="#6c3"/></svg>
<svg class="a" style="left:505.7px;top:1738.0px;" width="34" height="34" viewBox="0 0 34 34"><rect x="0.5" y="0.5" width="33" height="33" rx="7.5" fill="#20123a" /><circle cx="17" cy="18" r="11.5" fill="#ff9a1a"/><circle cx="17" cy="18" r="8.5" fill="#e8422e"/><circle cx="16.5" cy="17.5" r="6" fill="#7a3ee8"/><path d="M21 4c5 3 8 8 7 14-1-4-3-6-6-7z" fill="#ffd23a"/></svg>
<svg class="a" style="left:551.7px;top:1738.0px;" width="34" height="34" viewBox="0 0 34 34"><defs><linearGradient id="ml" x1="0" y1="0" x2="0" y2="1"><stop offset="0" stop-color="#1fc1fb"/><stop offset="1" stop-color="#1874ee"/></linearGradient></defs><rect x="0.5" y="0.5" width="33" height="33" rx="7.5" fill="url(#ml)" /><rect x="6" y="10" width="22" height="14" rx="1.5" fill="#f4f6f8"/><path d="M6.5 10.5L17 19l10.5-8.5" fill="none" stroke="#c9d3dd" stroke-width="1.2"/></svg>
<svg class="a" style="left:597.7px;top:1738.0px;" width="34" height="34" viewBox="0 0 34 34"><rect x="0.5" y="0.5" width="33" height="33" rx="7.5" fill="#a8824f" /><circle cx="16" cy="17" r="9" fill="none" stroke="#8a6a3e" stroke-width="1.2"/><circle cx="16" cy="14.5" r="3" fill="#8a6a3e"/><path d="M10.5 22.5c2-3 9-3 11 0" fill="#8a6a3e"/><rect x="30" y="6" width="3" height="6" fill="#6ac"/><rect x="30" y="13" width="3" height="6" fill="#e94"/><rect x="30" y="20" width="3" height="6" fill="#6c6"/></svg>
<svg class="a" style="left:643.7px;top:1738.0px;" width="34" height="34" viewBox="0 0 34 34"><rect x="0.5" y="0.5" width="33" height="33" rx="7.5" fill="#f3f1ea" /><path d="M.5 8A7.5 7.5 0 0 1 8 .5h18A7.5 7.5 0 0 1 33.5 8v2H.5z" fill="#fbd33e"/><path d="M3 16h28M3 21.5h28M3 27h28" stroke="#dcd8ce" stroke-width="0.8"/></svg>
<svg class="a" style="left:689.7px;top:1738.0px;" width="34" height="34" viewBox="0 0 34 34"><rect x="0.5" y="0.5" width="33" height="33" rx="7.5" fill="#fafafa" /><path d="M.5 8A7.5 7.5 0 0 1 8 .5h18A7.5 7.5 0 0 1 33.5 8v1H.5z" fill="#ef4b43"/><text x="17" y="8" text-anchor="middle" font-size="6.5" font-weight="700" fill="#fff" font-family="Liberation Sans">JAN</text><text x="17" y="29" text-anchor="middle" font-size="17" fill="#222" font-family="Liberation Sans">15</text></svg>
<svg class="a" style="left:735.7px;top:1738.0px;" width="34" height="34" viewBox="0 0 34 34"><rect x="0.5" y="0.5" width="33" height="33" rx="7.5" fill="#fbfbfb" /><circle cx="8" cy="9" r="2.2" fill="#2f7df6"/><circle cx="8" cy="17" r="2.2" fill="#f23a3a"/><circle cx="8" cy="25" r="2.2" fill="#f49b27"/><path d="M13 9h15M13 17h15M13 25h15" stroke="#d8d8d8" stroke-width="1"/></svg>
<svg class="a" style="left:781.7px;top:1738.0px;" width="34" height="34" viewBox="0 0 34 34"><rect x="0.5" y="0.5" width="33" height="33" rx="7.5" fill="#7fd27a" /><path d="M.5 20L20 .5h6L.5 28z" fill="#f5f5f5"/><path d="M12 33.5L33.5 14v8L20 33.5z" fill="#f4d44a"/><path d="M.5 24l8 9.5H8A7.5 7.5 0 0 1 .5 26z" fill="#f07cc0"/><rect x="12" y="0.5" width="3.5" height="33" fill="#3b8ff6"/><circle cx="14" cy="24" r="5.5" fill="#3b8ff6" stroke="#fff" stroke-width="1.5"/><path d="M14 20.5l2.5 6-2.5-1.5-2.5 1.5z" fill="#fff"/></svg>
<svg class="a" style="left:827.7px;top:1738.0px;" width="34" height="34" viewBox="0 0 34 34"><rect x="0.5" y="0.5" width="33" height="33" rx="7.5" fill="#fdfdfd" /><ellipse cx="17" cy="10" rx="3.8" ry="6.5" fill="#f9b93b" fill-opacity="0.85" transform="rotate(0 17 17)"/><ellipse cx="17" cy="10" rx="3.8" ry="6.5" fill="#f6792f" fill-opacity="0.85" transform="rotate(45 17 17)"/><ellipse cx="17" cy="10" rx="3.8" ry="6.5" fill="#ea3f5a" fill-opacity="0.85" transform="rotate(90 17 17)"/><ellipse cx="17" cy="10" rx="3.8" ry="6.5" fill="#c24fc6" fill-opacity="0.85" transform="rotate(135 17 17)"/><ellipse cx="17" cy="10" rx="3.8" ry="6.5" fill="#7a5be8" fill-opacity="0.85" transform="rotate(180 17 17)"/><ellipse cx="17" cy="10" rx="3.8" ry="6.5" fill="#3d9af2" fill-opacity="0.85" transform="rotate(225 17 17)"/><ellipse cx="17" cy="10" rx="3.8" ry="6.5" fill="#3ac6c9" fill-opacity="0.85" transform="rotate(270 17 17)"/><ellipse cx="17" cy="10" rx="3.8" ry="6.5" fill="#69d04e" fill-opacity="0.85" transform="rotate(315 17 17)"/></svg>
<svg class="a" style="left:873.7px;top:1738.0px;" width="34" height="34" viewBox="0 0 34 34"><rect x="0.5" y="0.5" width="33" height="33" rx="7.5" fill="#33c45a" /><rect x="6" y="11" width="15" height="12" rx="3" fill="#fff"/><path d="M22 15l7-4v12l-7-4z" fill="#fff"/></svg>
<svg class="a" style="left:919.7px;top:1738.0px;" width="34" height="34" viewBox="0 0 34 34"><rect x="0.5" y="0.5" width="33" height="33" rx="7.5" fill="#f8961f" /><path d="M8 27L26 8l1.5 1.5L9.5 28z" fill="#fff"/><path d="M6 29h22" stroke="#fff" stroke-width="0.8"/></svg>
<svg class="a" style="left:965.7px;top:1738.0px;" width="34" height="34" viewBox="0 0 34 34"><rect x="0.5" y="0.5" width="33" height="33" rx="7.5" fill="#2fbe4a" /><rect x="7" y="21" width="3" height="7" fill="#fff"/><rect x="12" y="16" width="3" height="12" fill="#fff"/><rect x="17" y="9" width="3" height="19" fill="#fff"/><rect x="22" y="13" width="3" height="15" fill="#fff"/></svg>
<svg class="a" style="left:1011.7px;top:1738.0px;" width="34" height="34" viewBox="0 0 34 34"><rect x="0.5" y="0.5" width="33" height="33" rx="7.5" fill="#1f8cf2" /><rect x="7" y="7" width="20" height="11" rx="1" fill="#fff"/><circle cx="17" cy="12" r="3" fill="#f9a33a"/><path d="M17 18v10M13 28h8" stroke="#fff" stroke-width="1.5"/></svg>
<svg class="a" style="left:1057.7px;top:1738.0px;" width="34" height="34" viewBox="0 0 34 34"><rect x="0.5" y="0.5" width="33" height="33" rx="7.5" fill="#fdfdfd" /><path d="M7 9l4-2 16 16v4l-4 2L7 13z" fill="#f2405a"/><path d="M7 15l10 12H9a2 2 0 0 1-2-2zM27 19L17 7h8a2 2 0 0 1 2 2z" fill="#f2405a"/></svg>
<svg class="a" style="left:1103.7px;top:1738.0px;" width="34" height="34" viewBox="0 0 34 34"><rect x="0.5" y="0.5" width="33" height="33" rx="7.5" fill="#f73a53" /><path d="M13 24V10l12-3v14" fill="none" stroke="#fff" stroke-width="2.2"/><circle cx="10.5" cy="24" r="3" fill="#fff"/><circle cx="22.5" cy="21" r="3" fill="#fff"/></svg>
<svg class="a" style="left:1149.7px;top:1738.0px;" width="34" height="34" viewBox="0 0 34 34"><rect x="0.5" y="0.5" width="33" height="33" rx="7.5" fill="#9b43d8" /><circle cx="17" cy="15" r="9" fill="none" stroke="#fff" stroke-width="1.8"/><circle cx="17" cy="15" r="5" fill="none" stroke="#fff" stroke-width="1.8"/><circle cx="17" cy="15" r="2.2" fill="#fff"/><rect x="15.3" y="19" width="3.4" height="9" rx="1.7" fill="#fff"/></svg>
<svg class="a" style="left:1195.7px;top:1738.0px;" width="34" height="34" viewBox="0 0 34 34"><rect x="0.5" y="0.5" width="33" height="33" rx="7.5" fill="#1a1f1e" /><text x="17" y="21" text-anchor="middle" font-size="11" font-weight="700" fill="#fff" font-family="Liberation Sans">&#63743;tv</text><circle cx="10" cy="17" r="3" fill="#fff"/></svg>
<svg class="a" style="left:1241.7px;top:1738.0px;" width="34" height="34" viewBox="0 0 34 34"><rect x="0.5" y="0.5" width="33" height="33" rx="7.5" fill="#cfcfcf" /><rect x="7" y="4" width="20" height="26" rx="2" fill="#2b2b2b"/><rect x="9" y="6" width="16" height="5" fill="#666"/><circle cx="11.5" cy="15.0" r="1.4" fill="#ddd"/><circle cx="17.0" cy="15.0" r="1.4" fill="#ddd"/><circle cx="22.5" cy="15.0" r="1.4" fill="#f09a28"/><circle cx="11.5" cy="19.5" r="1.4" fill="#ddd"/><circle cx="17.0" cy="19.5" r="1.4" fill="#ddd"/><circle cx="22.5" cy="19.5" r="1.4" fill="#f09a28"/><circle cx="11.5" cy="24.0" r="1.4" fill="#ddd"/><circle cx="17.0" cy="24.0" r="1.4" fill="#ddd"/><circle cx="22.5" cy="24.0" r="1.4" fill="#f09a28"/></svg>
<svg class="a" style="left:1287.7px;top:1738.0px;" width="34" height="34" viewBox="0 0 34 34"><rect x="0.5" y="0.5" width="33" height="33" rx="7.5" fill="#f8891e" /><path d="M5 10c4-1 8-1 12 1v15c-4-2-8-2-12-1zM29 10c-4-1-8-1-12 1v15c4-2 8-2 12-1z" fill="#fff"/></svg>
<svg class="a" style="left:1333.7px;top:1738.0px;" width="34" height="34" viewBox="0 0 34 34"><rect x="0.5" y="0.5" width="33" height="33" rx="7.5" fill="#1a8af2" /><path d="M12 8l9 16M22 8l-9 16M8 22h18" stroke="#fff" stroke-width="2.2" stroke-linecap="round"/></svg>
<svg class="a" style="left:1379.7px;top:1738.0px;" width="34" height="34" viewBox="0 0 34 34"><rect x="0.5" y="0.5" width="33" height="33" rx="7.5" fill="#a9adb1" /><circle cx="17" cy="17" r="13" fill="#4a4c4f"/><circle cx="17" cy="17" r="9" fill="none" stroke="#9a9c9f" stroke-width="3"/><path d="M17 17V8M17 17l8 5M17 17l-8 5" stroke="#9a9c9f" stroke-width="2"/></svg>
<svg class="a" style="left:1425.7px;top:1738.0px;" width="34" height="34" viewBox="0 0 34 34"><rect x="0.5" y="0.5" width="33" height="33" rx="7.5" fill="#34c75a" /><ellipse cx="17" cy="16" rx="11" ry="8.5" fill="#fff"/><path d="M9 21l-2 5 6-3z" fill="#fff"/></svg>
<svg class="a" style="left:1471.7px;top:1738.0px;" width="34" height="34" viewBox="0 0 34 34"><rect x="0.5" y="0.5" width="33" height="33" rx="7.5" fill="#a3393d" /><text x="17" y="22" text-anchor="middle" font-size="12" font-weight="700" fill="#f5e9e9" font-family="Liberation Serif">Aa</text></svg>
<svg class="a" style="left:1517.7px;top:1738.0px;" width="34" height="34" viewBox="0 0 34 34"><rect x="0.5" y="0.5" width="33" height="33" rx="7.5" fill="#15191a" stroke="#8a8f91" stroke-width="1"/><path d="M4 19h8l2-6 3 10 2-5h11" fill="none" stroke="#2fb785" stroke-width="1"/></svg>
<svg class="a" style="left:1563.7px;top:1738.0px;" width="34" height="34" viewBox="0 0 34 34"><defs><linearGradient id="fc" x1="0" y1="0" x2="1" y2="1"><stop offset="0" stop-color="#ffd400"/><stop offset="0.4" stop-color="#ff3c5a"/><stop offset="0.7" stop-color="#5ac8fa"/><stop offset="1" stop-color="#5ad06a"/></linearGradient></defs><rect x="1" y="11" width="32" height="22" rx="6" fill="url(#fc)" stroke="#333" stroke-width="1.5"/><path d="M2 4l30-3 1 7-30 3z" fill="#333"/><path d="M6 3.5l3 6M12 3l3 6M18 2.5l3 6M24 2l3 6" stroke="#eee" stroke-width="2"/></svg>
<svg class="a" style="left:1609.7px;top:1738.0px;" width="34" height="34" viewBox="0 0 34 34"><rect x="0.5" y="0.5" width="33" height="33" rx="7.5" fill="#4a4d52" /><path d="M9 8l16 16M25 8L9 24" stroke="#bbb" stroke-width="2"/><circle cx="17" cy="16" r="4" fill="#999"/><rect x="9" y="27" width="16" height="3" fill="#e74"/></svg>
<svg class="a" style="left:1655.7px;top:1738.0px;" width="34" height="34" viewBox="0 0 34 34"><rect x="0.5" y="0.5" width="33" height="33" rx="7.5" fill="#141414" stroke="#aaa" stroke-width="1"/><circle cx="17" cy="16" r="11" fill="#c9ccd1"/><circle cx="17" cy="16" r="3" fill="#444"/><rect x="14" y="28" width="6" height="2" fill="#ddd"/></svg>
<svg class="a" style="left:1701.7px;top:1738.0px;" width="34" height="34" viewBox="0 0 34 34"><rect x="0.5" y="0.5" width="33" height="33" rx="7.5" fill="#222" /><rect x="3" y="15" width="28" height="15" fill="#f5f5f5"/><rect x="6.6" y="15" width="0.8" height="15" fill="#888"/><rect x="10.6" y="15" width="0.8" height="15" fill="#888"/><rect x="14.6" y="15" width="0.8" height="15" fill="#888"/><rect x="18.6" y="15" width="0.8" height="15" fill="#888"/><rect x="22.6" y="15" width="0.8" height="15" fill="#888"/><rect x="26.6" y="15" width="0.8" height="15" fill="#888"/><rect x="5.7" y="15" width="2.6" height="8" fill="#111"/><rect x="9.7" y="15" width="2.6" height="8" fill="#111"/><rect x="17.7" y="15" width="2.6" height="8" fill="#111"/><rect x="21.7" y="15" width="2.6" height="8" fill="#111"/><rect x="25.7" y="15" width="2.6" height="8" fill="#111"/><rect x="5" y="5" width="24" height="5" fill="#333"/></svg>
<svg class="a" style="left:1747.7px;top:1738.0px;" width="34" height="34" viewBox="0 0 34 34"><rect x="0.5" y="0.5" width="33" height="33" rx="7.5" fill="#001e36" /><text x="17" y="23" text-anchor="middle" font-size="14" font-weight="700" fill="#31a8ff" font-family="Liberation Sans">Ps</text></svg>
<svg class="a" style="left:1793.7px;top:1738.0px;" width="34" height="34" viewBox="0 0 34 34"><rect x="0.5" y="0.5" width="33" height="33" rx="7.5" fill="#e7e7e7" /><path d="M9 6v8a5 5 0 0 0 10 0V6" fill="none" stroke="#444" stroke-width="1.5"/><circle cx="24" cy="24" r="8" fill="#b8bcc0"/><circle cx="24" cy="24" r="3" fill="#666"/></svg>
<svg class="a" style="left:1839.7px;top:1738.0px;" width="34" height="34" viewBox="0 0 34 34"><rect x="-2" y="-2" width="38" height="38" rx="9" fill="#3b56d4"/><circle cx="17" cy="17" r="14" fill="#f3f4fa"/><path d="M17 17l9-5M17 17l-7-3" stroke="#333" stroke-width="1.5"/><path d="M17 17v11" stroke="#d33" stroke-width="1"/></svg>
<svg class="a" style="left:1885.7px;top:1738.0px;" width="34" height="34" viewBox="0 0 34 34"><rect x="14" y="1" width="19" height="14" fill="#f0c24a" stroke="#222" stroke-width="1.2"/><path d="M14 1l9.5 8 9.5-8" fill="none" stroke="#222" stroke-width="1.2"/><circle cx="12" cy="17" r="9" fill="#0a7a2a" stroke="#ccc" stroke-width="2"/><path d="M18 23l7 8" stroke="#333" stroke-width="3"/></svg>
<svg class="a" style="left:1931.7px;top:1738.0px;" width="34" height="34" viewBox="0 0 34 34"><path d="M1 33C6 20 14 6 33 1c-4 10-4 22-2 32z" fill="#1f6fe0"/><path d="M3 30c8-2 18-1 28 1" stroke="#cde" stroke-width="1"/></svg>
<svg class="a" style="left:1977.7px;top:1738.0px;" width="34" height="34" viewBox="0 0 34 34"><rect x="0.5" y="0.5" width="33" height="33" rx="7.5" fill="#1d1d17" stroke="#aaa" stroke-width="1"/><text x="4" y="14" font-size="7" fill="#e8c53a" font-family="Liberation Mono">WARNIN</text><text x="2" y="24" font-size="7" fill="#e8c53a" font-family="Liberation Mono">AY 7:36</text></svg>
<svg class="a" style="left:2023.7px;top:1738.0px;" width="34" height="34" viewBox="0 0 34 34"><path d="M0 17c8-10 26-10 34 0-8 10-26 10-34 0z" fill="#a8d4ee"/><circle cx="17" cy="17" r="6" fill="#6fa8c8"/><circle cx="17" cy="17" r="2" fill="#333"/></svg>
<svg class="a" style="left:2069.7px;top:1738.0px;" width="34" height="34" viewBox="0 0 34 34"><rect x="0.5" y="0.5" width="33" height="33" rx="7.5" fill="#151515" stroke="#999" stroke-width="1"/><path d="M6 8l4 3-4 3M11 15h5" fill="none" stroke="#fff" stroke-width="1.2"/></svg>
<svg class="a" style="left:2115.7px;top:1738.0px;" width="34" height="34" viewBox="0 0 34 34"><rect x="0.5" y="0.5" width="33" height="33" rx="7.5" fill="#fbfbfb" /><rect x="6" y="6" width="14" height="14" fill="none" stroke="#1f6fe0" stroke-width="3"/><rect x="14" y="14" width="14" height="14" fill="none" stroke="#e23a3a" stroke-width="3"/><path d="M12 12l10 10" stroke="#1f6fe0" stroke-width="2"/></svg>
<svg class="a" style="left:2161.7px;top:1738.0px;" width="34" height="34" viewBox="0 0 34 34"><rect x="0.5" y="0.5" width="33" height="33" rx="7.5" fill="#262336" /><path d="M17 4l8 8-2 14-6 4-7-8 3-12z" fill="#7c5ce0"/><path d="M17 4l-4 14 4 12" fill="#a68af5"/></svg>
<svg class="a" style="left:2207.7px;top:1738.0px;" width="34" height="34" viewBox="0 0 34 34"><rect x="0.5" y="0.5" width="33" height="33" rx="7.5" fill="#3b8ad8" /><text x="17" y="22" text-anchor="middle" font-size="15" fill="#fff" font-family="Liberation Sans">qb</text></svg>
<svg class="a" style="left:2253.7px;top:1738.0px;" width="34" height="34" viewBox="0 0 34 34"><rect x="0.5" y="0.5" width="33" height="33" rx="7.5" fill="#ece7da" /><path d="M12 14h3l4-4v14l-4-4h-3z" fill="#555"/><path d="M21 13c1.5 2 1.5 6 0 8" fill="none" stroke="#555" stroke-width="1"/></svg>
<svg class="a" style="left:2319.7px;top:1738.0px;" width="34" height="34" viewBox="0 0 34 34"><rect x="0.5" y="0.5" width="33" height="33" rx="7.5" fill="#d11c1c" /><path d="M8 25c3-4 6-12 8-17 1 5 5 12 10 14-5-1-13 0-18 3z" fill="none" stroke="#fff" stroke-width="1.8"/></svg>
<svg class="a" style="left:2365.7px;top:1738.0px;" width="34" height="34" viewBox="0 0 34 34"><rect x="0.5" y="0.5" width="33" height="33" rx="7.5" fill="#f2f2f2" /><path d="M5 8h18M5 12h18M5 16h18M5 20h14M5 24h14" stroke="#999" stroke-width="0.8"/><path d="M30 2L12 32" stroke="#222" stroke-width="2"/></svg>
<svg class="a" style="left:2411.7px;top:1738.0px;" width="34" height="34" viewBox="0 0 34 34"><rect x="0.5" y="0.5" width="33" height="33" rx="7.5" fill="#e6eaee" /><rect x="3" y="3" width="28" height="22" fill="#9cc6ea"/><path d="M3 20l8-6 9 6 11-4v9H3z" fill="#3e6f9a"/><rect x="17" y="18" width="12" height="12" rx="2" fill="#2a2a2a"/></svg>
<svg class="a" style="left:2477.7px;top:1738.0px;" width="34" height="34" viewBox="0 0 34 34"><rect x="0" y="4" width="34" height="26" rx="2" fill="#1b1b1b"/><rect x="6" y="9" width="20" height="16" fill="#c96a3a"/><circle cx="26" cy="27" r="6" fill="#ff7139"/><circle cx="25.5" cy="27.5" r="3.2" fill="#7a3ee8"/></svg>
<svg class="a" style="left:2523.7px;top:1738.0px;" width="34" height="34" viewBox="0 0 34 34"><path d="M4 5h26l-3 28H7z" fill="#a9adb1"/><path d="M4 5h26l-3 28H7z" fill="none" stroke="#7f8387" stroke-width="1"/><path d="M6 4c4-3 8-1 11-3 4 2 7 0 11 3" fill="#eee"/><circle cx="14" cy="4" r="2" fill="#4aa3e0"/><circle cx="20" cy="4" r="2" fill="#e05a3a"/></svg>
<div class="a" style="left:1450.7px;top:1732.0px;width:14.0px;height:14.0px;background:#f23b30;border-radius:50%"><div class="t" style="left:1.5px;top:3px;font-size:8px;color:#fff">16</div></div>
<div class="a" style="left:2304.0px;top:1735.0px;width:2.0px;height:46.0px;background:rgba(200,200,200,0.5);"></div>
<div class="a" style="left:2462.0px;top:1735.0px;width:2.0px;height:46.0px;background:rgba(200,200,200,0.5);"></div>
<div class="a" style="left:335.7px;top:1780.0px;width:6.0px;height:6.0px;background:#dddddd;border-radius:50%"></div>
<div class="a" style="left:427.7px;top:1780.0px;width:6.0px;height:6.0px;background:#dddddd;border-radius:50%"></div>
<div class="a" style="left:519.7px;top:1780.0px;width:6.0px;height:6.0px;background:#dddddd;border-radius:50%"></div>
<div class="a" style="left:933.7px;top:1780.0px;width:6.0px;height:6.0px;background:#dddddd;border-radius:50%"></div>
<div class="a" style="left:2175.7px;top:1780.0px;width:6.0px;height:6.0px;background:#dddddd;border-radius:50%"></div>
<div class="a" style="left:2333.7px;top:1780.0px;width:6.0px;height:6.0px;background:#dddddd;border-radius:50%"></div>
<div class="a" style="left:2379.7px;top:1780.0px;width:6.0px;height:6.0px;background:#dddddd;border-radius:50%"></div></body></html>
